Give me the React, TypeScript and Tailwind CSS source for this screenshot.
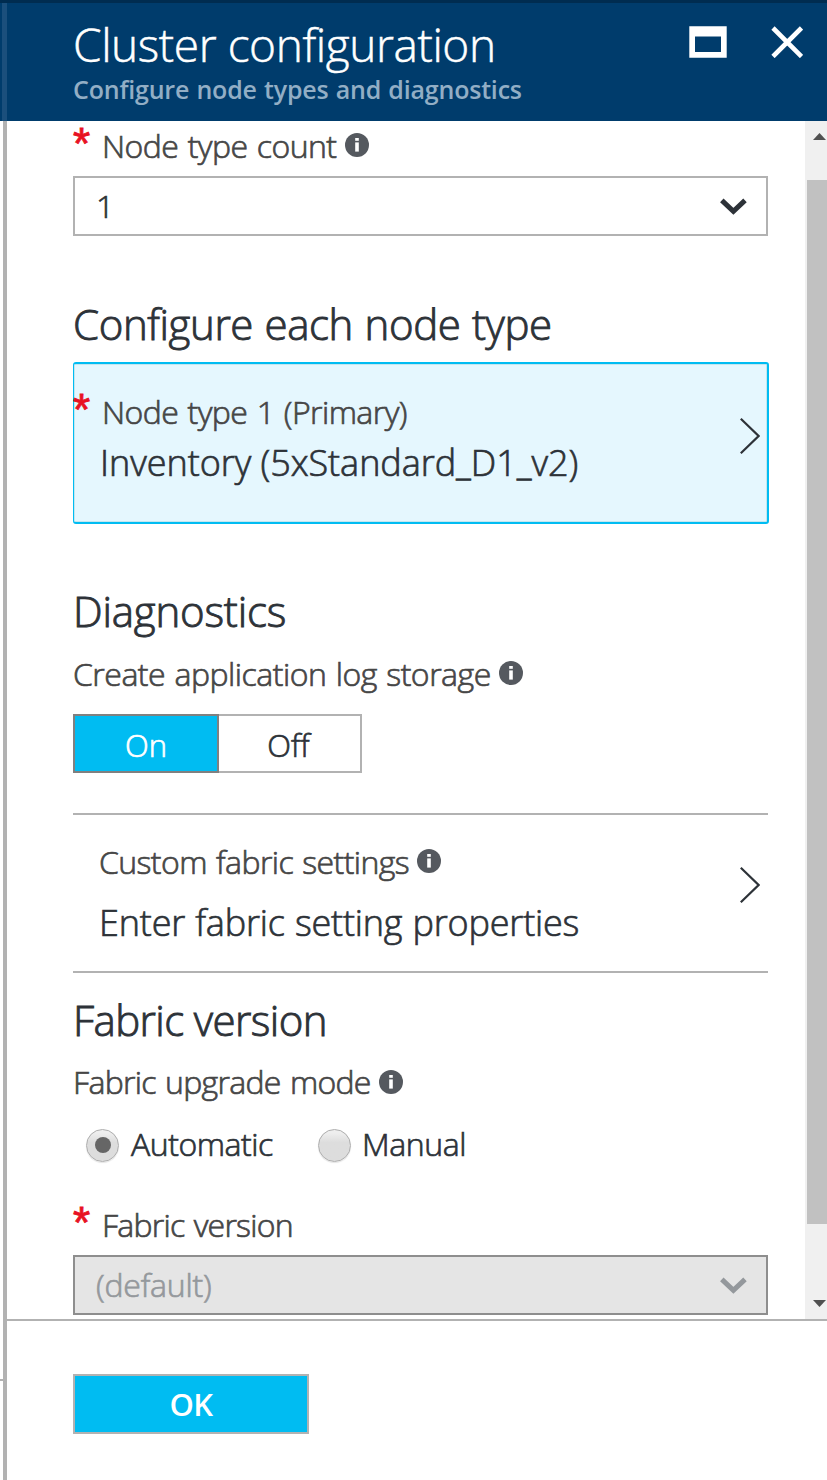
import React from 'react';

function InfoIcon() {
  return (
    <svg className="h-6 w-6 shrink-0" viewBox="0 0 24 24">
      <circle cx="12" cy="12" r="12" fill="#55595f" />
      <rect x="10.2" y="5" width="3.6" height="2.8" fill="#fff" />
      <rect x="10.2" y="9.4" width="3.6" height="9.2" fill="#fff" />
    </svg>
  );
}

function Required() {
  return (
    <span className="h-10 w-[29px] shrink-0 font-['Liberation_Sans'] text-[44px] leading-[37px] text-[#e81123] [-webkit-text-stroke:0.9px_currentColor]">
      *
    </span>
  );
}

function ChevronDown() {
  return (
    <svg className="mt-0.5 h-5 w-7 shrink-0" viewBox="0 0 28 20" fill="none" stroke="currentColor" strokeWidth="5">
      <path d="M2.8 3.4 14.4 14.4 26 3.4" />
    </svg>
  );
}

function ChevronRight() {
  return (
    <svg className="h-9 w-5 shrink-0" viewBox="0 0 20 36" fill="none" stroke="#2d3238" strokeWidth="2.2">
      <path d="M.8.8 18.6 18 .8 35.2" />
    </svg>
  );
}

function Heading({ className, children }: { className: string; children: React.ReactNode }) {
  return (
    <h2 className={`h-14 text-[42px] leading-[58px] font-light text-[#2d3238] [-webkit-text-stroke:0.9px_currentColor] ${className}`}>
      {children}
    </h2>
  );
}

function Label({ className, children }: { className: string; children: React.ReactNode }) {
  return (
    <span className={`pt-0.5 text-[32px] leading-10 font-light text-[#464646] [word-spacing:1.6px] [-webkit-text-stroke:0.7px_currentColor] ${className}`}>
      {children}
    </span>
  );
}

function Radio({ checked }: { checked?: boolean }) {
  return (
    <span className="flex h-[33px] w-[33px] shrink-0 items-center justify-center rounded-full border border-[#adadad] bg-linear-to-b from-[#eeeeee] from-10% to-[#dddddd] to-40% shadow-[0_1px_1px_#e4e4e4]">
      {checked && <span className="h-4 w-4 rounded-full bg-[#666666]" />}
    </span>
  );
}

export default function App() {
  return (
    <div className="flex h-[1480px] w-[827px] flex-col overflow-hidden bg-white font-['Open_Sans','Noto_Sans',sans-serif] whitespace-nowrap">
      <header className="flex h-[121px] shrink-0 border-t-[3px] border-[#002c50] bg-[#003c6c]">
        <div className="ml-0.5 w-[5px] bg-[#1b4f7c]" />
        <div className="flex-1 pt-2 pl-[66px]">
          <h1 className="h-[60px] text-[46px] leading-[66px] font-light tracking-[-0.42px] text-white [-webkit-text-stroke:0.5px_currentColor]">
            Cluster configuration
          </h1>
          <p className="h-9 text-[25px] leading-[37px] font-semibold tracking-[-0.2px] text-[#92aec5] [word-spacing:1px]">
            Configure node types and diagnostics
          </p>
        </div>
        <div className="flex gap-[44px] pt-[23px] pr-6">
          <svg className="h-8 w-[38px]" viewBox="0 0 38 32">
            <path fillRule="evenodd" fill="#fff" d="M.3.3h37.4v31.4H.3zM6 10.5v15.5h26V10.5z" />
          </svg>
          <svg className="h-8 w-8" viewBox="0 0 32 32" fill="none" stroke="#fff" strokeWidth="4.6">
            <path d="M2 2 30.5 30.5M30.5 2 2 30.5" />
          </svg>
        </div>
      </header>

      <div className="flex min-h-0 flex-1">
        <div className="w-[3px] pt-[1258px]">
          <div className="h-0.5 bg-[#b2b2b2]" />
        </div>
        <div className="w-1 bg-[#b2b2b2]" />
        <div className="flex flex-1 flex-col">
          <main className="flex h-[1198px]">
            <div className="w-[798px] pt-1 pl-[66px]">
              <div className="flex h-10 items-center">
                <Required />
                <Label className="tracking-[-0.55px]">Node type count</Label>
                <span className="pl-2"><InfoIcon /></span>
              </div>
              <div className="mt-[11px] flex h-[60px] w-[695px] items-center justify-between border-2 border-[#b2b2b2] pr-[19px] pl-[21px] text-[#2d3238]">
                <span className="text-[32px] leading-10 font-light [-webkit-text-stroke:0.7px_currentColor]">1</span>
                <ChevronDown />
              </div>

              <Heading className="mt-[59px] tracking-[-0.4px] [word-spacing:1px]">Configure each node type</Heading>
              <div className="mt-[11px] flex h-[162px] w-[696px] items-center justify-between rounded-[3px] border-2 border-l border-[#00bcf2] bg-[#e5f7fe] pr-[7px] shadow-[inset_0_0_0_1px_#c4e6ef]">
                <div className="h-full pt-[27px]">
                  <div className="-ml-px flex h-10 items-center">
                    <Required />
                    <Label className="tracking-[-0.56px]">Node type 1 (Primary)</Label>
                  </div>
                  <div className="mt-2.5 pl-[26px] text-[36px] leading-[44px] font-light tracking-[-0.05px] text-[#2d3238] [-webkit-text-stroke:0.7px_currentColor]">
                    Inventory (5xStandard_D1_v2)
                  </div>
                </div>
                <span className="pb-[15px]"><ChevronRight /></span>
              </div>

              <Heading className="mt-[58px] tracking-[-0.2px]">Diagnostics</Heading>
              <div className="mt-[15px] flex h-10 items-center">
                <Label className="tracking-[-0.5px]">Create application log storage</Label>
                <span className="pl-2"><InfoIcon /></span>
              </div>
              <div className="mt-[21px] flex h-[59px] text-[31px] leading-10 font-light [-webkit-text-stroke:0.7px_currentColor]">
                <div className="flex w-[146px] items-center justify-center border-2 border-[#808080] bg-[#00bcf2] pt-0.5 text-white">On</div>
                <div className="flex w-[143px] items-center justify-center border-2 border-l-0 border-[#b2b2b2] pt-0.5 pr-0.5 text-[#2d3238]">Off</div>
              </div>

              <div className="mt-10 flex h-[160px] w-[695px] items-center justify-between border-y-2 border-[#b2b2b2] pr-2 pl-[26px]">
                <div className="h-full pt-[26px]">
                  <div className="flex h-10 items-center">
                    <Label className="tracking-[-0.6px]">Custom fabric settings</Label>
                    <span className="pl-2"><InfoIcon /></span>
                  </div>
                  <div className="mt-5 text-[36px] leading-[44px] font-light tracking-[-0.18px] text-[#2d3238] [word-spacing:1px] [-webkit-text-stroke:0.7px_currentColor]">
                    Enter fabric setting properties
                  </div>
                </div>
                <span className="pb-4"><ChevronRight /></span>
              </div>

              <Heading className="mt-[18px] tracking-[-0.6px]">Fabric version</Heading>
              <div className="mt-[14px] flex h-10 items-center">
                <Label className="tracking-[-0.7px]">Fabric upgrade mode</Label>
                <span className="pt-px pl-2"><InfoIcon /></span>
              </div>
              <div className="mt-[22px] flex h-10 items-center pl-[13px] text-[32px] leading-10 font-light text-[#2d3238] [-webkit-text-stroke:0.7px_currentColor]">
                <span className="pt-1"><Radio checked /></span>
                <span className="w-[199px] pt-0.5 pl-3 tracking-[-0.47px]">Automatic</span>
                <span className="pt-1"><Radio /></span>
                <span className="pt-0.5 pl-[11px] tracking-[-0.4px]">Manual</span>
              </div>
              <div className="mt-[41px] flex h-10 items-center">
                <Required />
                <Label className="tracking-[-0.75px]">Fabric version</Label>
              </div>
              <div className="mt-[11px] flex h-[60px] w-[695px] items-center justify-between border-2 border-[#8e8e8e] bg-[#e5e5e5] pr-[19px] pl-[21px] text-[#94989c]">
                <span className="text-[32px] leading-10 font-light tracking-[-0.21px] [-webkit-text-stroke:0.7px_currentColor]">(default)</span>
                <ChevronDown />
              </div>
            </div>
            <div className="flex w-[22px] flex-col bg-[#f0f0f0] pl-0.5">
              <svg className="h-[59px] w-5" viewBox="0 0 20 59">
                <path d="M6 19 12.5 12 19 19z" fill="#505050" />
              </svg>
              <div className="h-[1044px] bg-[#c1c1c1]" />
              <svg className="h-[95px] w-5" viewBox="0 0 20 95">
                <path d="M6 76 12.5 83 19 76z" fill="#505050" />
              </svg>
            </div>
          </main>
          <footer className="flex-1 border-t-2 border-[#b2b2b2] pt-[53px] pl-[66px]">
            <button className="flex h-[60px] w-[236px] items-center justify-center border-2 border-[#b2b2b2] bg-[#00bcf2] text-[31px] leading-10 font-semibold tracking-[-0.7px] text-white">
              OK
            </button>
          </footer>
        </div>
      </div>
    </div>
  );
}
